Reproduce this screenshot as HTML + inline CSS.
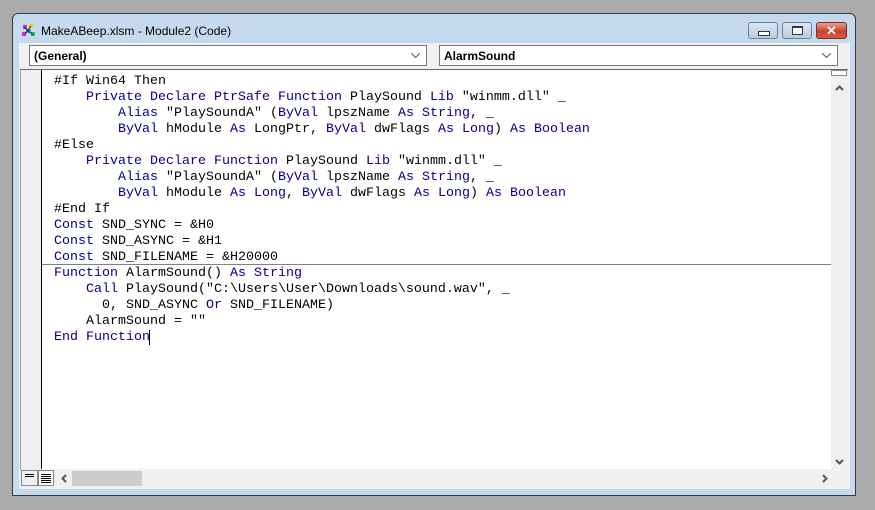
<!DOCTYPE html><html><head><style>
body{margin:0;width:875px;height:510px;background:#ababab;position:relative;overflow:hidden;font-family:"Liberation Sans",sans-serif}
.a{position:absolute}
.code{font-family:"Liberation Mono",monospace;font-size:13.33px;line-height:16px;white-space:pre;color:#000}
.k{color:#00008b}
</style></head><body>
<div class="a" style="left:12px;top:13px;width:844px;height:483px;background:#c5daee;border:1px solid #3a3a3a;border-radius:6px 6px 0 0;box-sizing:border-box"></div>
<svg class="a" style="left:21px;top:23px" width="16" height="14"><rect x="2" y="2" width="4" height="4" fill="#e020e0"/><rect x="8" y="1" width="4" height="4" fill="#f0d000"/><rect x="5" y="6" width="5" height="4" fill="#20b0c0"/><rect x="1" y="9" width="4" height="4" fill="#e020e0"/><rect x="10" y="9" width="4" height="4" fill="#20c060"/><path d="M3 4L12 12M10 3L4 11" stroke="#222" stroke-width="1"/></svg>
<div class="a" style="left:41px;top:24px;font-size:12px;color:#000">MakeABeep.xlsm - Module2 (Code)</div>
<div class="a" style="left:748px;top:22px;width:30px;height:17px;border:1px solid #6d7d92;border-radius:3px;background:linear-gradient(#dce7f3,#b8cbe0);box-sizing:border-box"><div class="a" style="left:9px;top:8px;width:10px;height:3px;background:#fff;border:1px solid #334"></div></div>
<div class="a" style="left:782px;top:22px;width:30px;height:17px;border:1px solid #6d7d92;border-radius:3px;background:linear-gradient(#dce7f3,#b8cbe0);box-sizing:border-box"><div class="a" style="left:9px;top:3px;width:9px;height:6px;border:1px solid #334;border-top-width:2px;background:#fff"></div></div>
<div class="a" style="left:816px;top:22px;width:31px;height:17px;border:1px solid #7a2b22;border-radius:3px;background:linear-gradient(#e8a090,#c9412f 55%,#d65a45);box-sizing:border-box;color:#fff;font-weight:bold;font-size:13px;text-align:center;line-height:15px">✕</div>
<div class="a" style="left:19px;top:43px;width:831px;height:446px;background:#f0f0f0"></div>
<div class="a" style="left:29px;top:45px;width:398px;height:21px;background:#fff;border:1px solid #7a7a7a;box-sizing:border-box;font-size:12px;font-weight:bold;padding:3px 0 0 4px">(General)<svg class="a" style="right:6px;top:7px" width="9" height="5"><path d="M0 0L4.5 4.5L9 0" stroke="#555" fill="none"/></svg></div>
<div class="a" style="left:439px;top:45px;width:399px;height:21px;background:#fff;border:1px solid #7a7a7a;box-sizing:border-box;font-size:12px;font-weight:bold;padding:3px 0 0 4px">AlarmSound<svg class="a" style="right:6px;top:7px" width="9" height="5"><path d="M0 0L4.5 4.5L9 0" stroke="#555" fill="none"/></svg></div>
<div class="a" style="left:20px;top:69px;width:828px;height:1px;background:#696969"></div>
<div class="a" style="left:20px;top:70px;width:1px;height:400px;background:#a0a0a0"></div>
<div class="a" style="left:41px;top:70px;width:1px;height:399px;background:#000"></div>
<div class="a" style="left:42px;top:70px;width:789px;height:399px;background:#fff"></div>
<div class="a" style="left:42px;top:264px;width:789px;height:1px;background:#808080"></div>
<div class="a code" style="left:54px;top:74px">#If Win64 Then
    <span class="k">Private Declare PtrSafe Function</span> PlaySound <span class="k">Lib</span> "winmm.dll" _
        <span class="k">Alias</span> "PlaySoundA" (<span class="k">ByVal</span> lpszName <span class="k">As String</span>, _
        <span class="k">ByVal</span> hModule <span class="k">As</span> LongPtr, <span class="k">ByVal</span> dwFlags <span class="k">As Long</span>) <span class="k">As Boolean</span>
#Else
    <span class="k">Private Declare Function</span> PlaySound <span class="k">Lib</span> "winmm.dll" _
        <span class="k">Alias</span> "PlaySoundA" (<span class="k">ByVal</span> lpszName <span class="k">As String</span>, _
        <span class="k">ByVal</span> hModule <span class="k">As Long</span>, <span class="k">ByVal</span> dwFlags <span class="k">As Long</span>) <span class="k">As Boolean</span>
#End If
<span class="k">Const</span> SND_SYNC = &amp;H0
<span class="k">Const</span> SND_ASYNC = &amp;H1
<span class="k">Const</span> SND_FILENAME = &amp;H20000
<span class="k">Function</span> AlarmSound() <span class="k">As String</span>
    <span class="k">Call</span> PlaySound("C:\Users\User\Downloads\sound.wav", _
      0, SND_ASYNC <span class="k">Or</span> SND_FILENAME)
    AlarmSound = ""
<span class="k">End Function</span></div>
<div class="a" style="left:149px;top:330px;width:1px;height:15px;background:#000"></div>
<div class="a" style="left:831px;top:70px;width:16px;height:399px;background:#f0f0f0"></div>
<div class="a" style="left:831px;top:70px;width:16px;height:6px;background:#fff;border:1px solid #888;box-sizing:border-box"></div>
<svg class="a" style="left:835px;top:85px" width="9" height="6"><path d="M1 5L4.5 1.5L8 5" stroke="#555" stroke-width="2" fill="none"/></svg>
<svg class="a" style="left:835px;top:459px" width="9" height="6"><path d="M1 1L4.5 4.5L8 1" stroke="#555" stroke-width="2" fill="none"/></svg>
<div class="a" style="left:21px;top:469px;width:826px;height:18px;background:#f0f0f0"></div>
<div class="a" style="left:21px;top:470px;width:17px;height:16px;border:1px solid #888;box-sizing:border-box;background:#f0f0f0"><div class="a" style="left:3px;top:3px;width:9px;height:1px;background:#000;box-shadow:0 2px #000"></div></div>
<div class="a" style="left:38px;top:470px;width:16px;height:16px;border:1px solid #888;box-sizing:border-box;background:#fff"><div class="a" style="left:2px;top:3px;width:10px;height:1px;background:#000;box-shadow:0 2px #000,0 4px #000,0 6px #000,0 8px #000"></div></div>
<svg class="a" style="left:61px;top:474px" width="6" height="9"><path d="M5 1L1.5 4.5L5 8" stroke="#555" stroke-width="2" fill="none"/></svg>
<div class="a" style="left:72px;top:471px;width:70px;height:15px;background:#cdcdcd"></div>
<svg class="a" style="left:822px;top:474px" width="6" height="9"><path d="M1 1L4.5 4.5L1 8" stroke="#555" stroke-width="2" fill="none"/></svg>
</body></html>
